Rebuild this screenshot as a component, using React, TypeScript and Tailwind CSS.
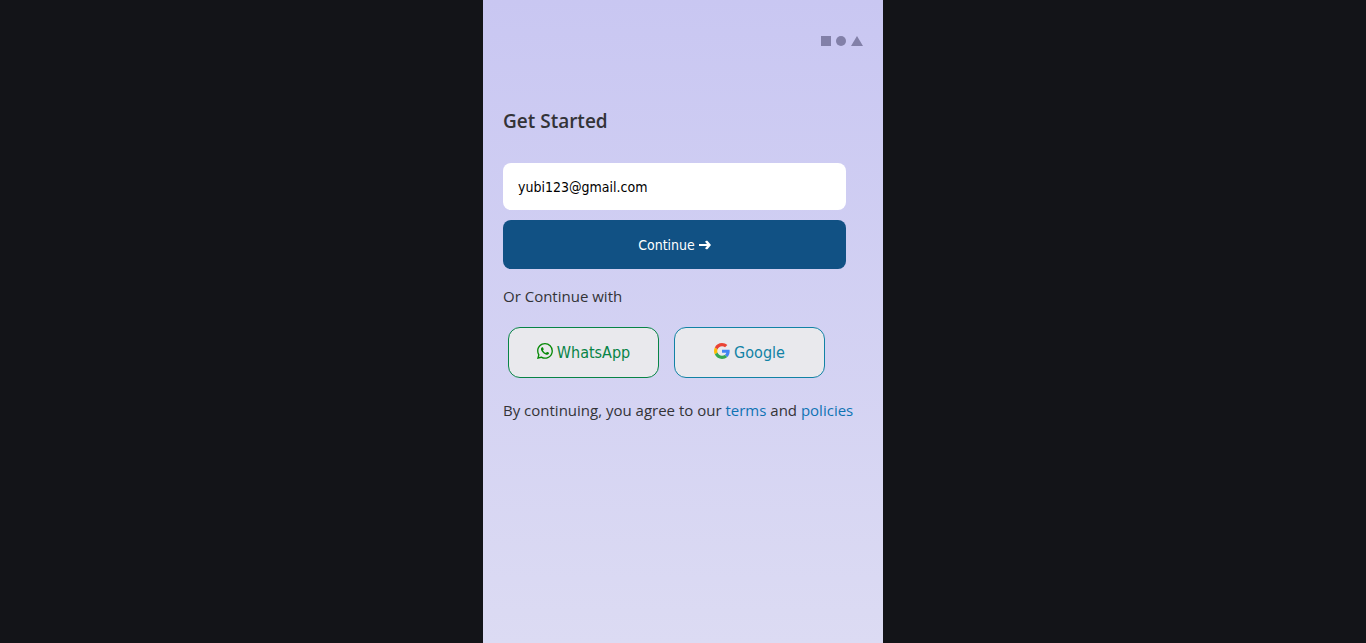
import { useState } from "react";
import { BsWhatsapp } from "react-icons/bs";

function Shapes() {
  return (
    <svg width="42" height="10" viewBox="0 0 42 10" fill="#8280a8" aria-hidden="true">
      <rect width="10" height="10" />
      <circle cx="20" cy="5" r="5" />
      <path d="M30 10 36 0l6 10z" />
    </svg>
  );
}

function Arrow() {
  return (
    <svg width="12" height="10" viewBox="0 0 12 10" fill="currentColor" aria-hidden="true">
      <path d="M0 4h8L6 1.800 7.200 0.800H8.400L12 5 8.400 9.200H7.200L6 8.200 8 6H0z" />
    </svg>
  );
}

function GoogleMark() {
  return (
    <svg className="mb-1 size-4" viewBox="0 0 48 48" aria-hidden="true">
      <path fill="#ea4335" d="M24 9.500c3.540 0 6.710 1.220 9.210 3.600l6.850-6.850C35.900 2.380 30.470 0 24 0 14.620 0 6.510 5.380 2.560 13.220l7.980 6.190C12.430 13.720 17.740 9.500 24 9.500z" />
      <path fill="#4285f4" d="M46.980 24.550c0-1.570-.15-3.090-.38-4.550H24v9.020h12.940c-.58 2.960-2.260 5.480-4.780 7.180l7.730 6c4.510-4.180 7.090-10.360 7.090-17.650z" />
      <path fill="#fbbc05" d="M10.530 28.590c-.48-1.450-.76-2.990-.76-4.590s.27-3.140.76-4.590l-7.980-6.190C.92 16.460 0 20.120 0 24c0 3.880.92 7.540 2.560 10.780l7.970-6.190z" />
      <path fill="#34a853" d="M24 48c6.480 0 11.930-2.130 15.890-5.810l-7.730-6c-2.150 1.450-4.920 2.300-8.160 2.300-6.260 0-11.570-4.220-13.470-9.910l-7.980 6.190C6.510 42.620 14.620 48 24 48z" />
    </svg>
  );
}

export default function App() {
  const [email, setEmail] = useState("yubi123@gmail.com");
  return (
    <div className="flex min-h-screen justify-center bg-[#131418] font-['Open_Sans',sans-serif] text-[#333337]">
      <main className="w-full max-w-[400px] bg-linear-to-b from-[#c9c7f2] to-[#dcdbf3] px-5">
        <header className="flex justify-end pt-9">
          <Shapes />
        </header>
        <h1 className="mt-[61px] text-[19px] leading-7 font-semibold">Get Started</h1>
        <form className="mt-7 mr-[17px] flex flex-col gap-2.5" onSubmit={(e) => e.preventDefault()}>
          <input
            type="email"
            aria-label="Email"
            value={email}
            onChange={(e) => setEmail(e.target.value)}
            className="h-[47px] w-full rounded-lg bg-white px-[15px] font-['DejaVu_Sans_Condensed','DejaVu_Sans',sans-serif] text-sm text-black outline-none"
          />
          <button
            type="submit"
            className="flex h-[49px] items-center justify-center gap-1 rounded-lg bg-[#115184] font-['DejaVu_Sans_Condensed','DejaVu_Sans',sans-serif] text-sm text-white"
          >
            Continue
            <Arrow />
          </button>
        </form>
        <p className="mt-[15px] text-[15px] leading-6">Or Continue with</p>
        <div className="mt-[19px] flex gap-[15px] pr-[38px] pl-[5px] font-['DejaVu_Sans_Condensed','DejaVu_Sans',sans-serif] text-base">
          <button
            type="button"
            className="flex h-[51px] flex-1 items-center justify-center gap-1 rounded-xl border border-[#078446] bg-[#e9e9ed] text-[#078446]"
          >
            <BsWhatsapp className="mb-1 size-4 text-[#078a08]" />
            WhatsApp
          </button>
          <button
            type="button"
            className="flex h-[51px] flex-1 items-center justify-center gap-1 rounded-xl border border-[#1182a5] bg-[#e9e9ed] text-[#1182a5]"
          >
            <GoogleMark />
            Google
          </button>
        </div>
        <p className="mt-5 text-[15px] leading-6 whitespace-nowrap">
          By continuing, you agree to our{" "}
          <a href="#terms" className="text-[#0f73b3]">terms</a> and{" "}
          <a href="#policies" className="text-[#0f73b3]">policies</a>
        </p>
      </main>
    </div>
  );
}
